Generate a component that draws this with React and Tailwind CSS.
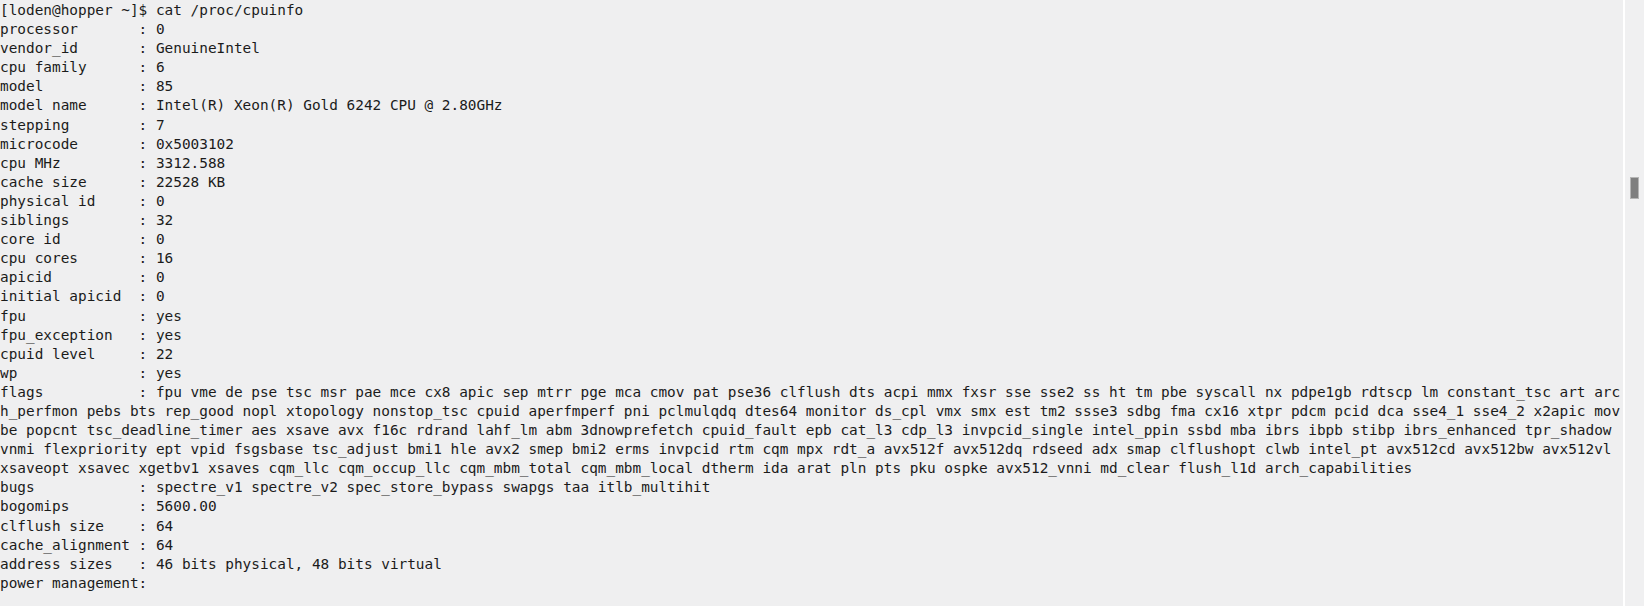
const pad = (s) => s.padEnd(16, " ");

const rows = [
  ["processor", "0"],
  ["vendor_id", "GenuineIntel"],
  ["cpu family", "6"],
  ["model", "85"],
  ["model name", "Intel(R) Xeon(R) Gold 6242 CPU @ 2.80GHz"],
  ["stepping", "7"],
  ["microcode", "0x5003102"],
  ["cpu MHz", "3312.588"],
  ["cache size", "22528 KB"],
  ["physical id", "0"],
  ["siblings", "32"],
  ["core id", "0"],
  ["cpu cores", "16"],
  ["apicid", "0"],
  ["initial apicid", "0"],
  ["fpu", "yes"],
  ["fpu_exception", "yes"],
  ["cpuid level", "22"],
  ["wp", "yes"],
];

const flagLines = [
  pad("flags") + ": fpu vme de pse tsc msr pae mce cx8 apic sep mtrr pge mca cmov pat pse36 clflush dts acpi mmx fxsr sse sse2 ss ht tm pbe syscall nx pdpe1gb rdtscp lm constant_tsc art arc",
  "h_perfmon pebs bts rep_good nopl xtopology nonstop_tsc cpuid aperfmperf pni pclmulqdq dtes64 monitor ds_cpl vmx smx est tm2 ssse3 sdbg fma cx16 xtpr pdcm pcid dca sse4_1 sse4_2 x2apic mov",
  "be popcnt tsc_deadline_timer aes xsave avx f16c rdrand lahf_lm abm 3dnowprefetch cpuid_fault epb cat_l3 cdp_l3 invpcid_single intel_ppin ssbd mba ibrs ibpb stibp ibrs_enhanced tpr_shadow",
  "vnmi flexpriority ept vpid fsgsbase tsc_adjust bmi1 hle avx2 smep bmi2 erms invpcid rtm cqm mpx rdt_a avx512f avx512dq rdseed adx smap clflushopt clwb intel_pt avx512cd avx512bw avx512vl",
  "xsaveopt xsavec xgetbv1 xsaves cqm_llc cqm_occup_llc cqm_mbm_total cqm_mbm_local dtherm ida arat pln pts pku ospke avx512_vnni md_clear flush_l1d arch_capabilities",
];

const tail = [
  ["bugs", "spectre_v1 spectre_v2 spec_store_bypass swapgs taa itlb_multihit"],
  ["bogomips", "5600.00"],
  ["clflush size", "64"],
  ["cache_alignment", "64"],
  ["address sizes", "46 bits physical, 48 bits virtual"],
];

export default function App() {
  const lines = [
    "[loden@hopper ~]$ cat /proc/cpuinfo",
    ...rows.map(([k, v]) => pad(k) + ": " + v),
    ...flagLines,
    ...tail.map(([k, v]) => pad(k) + ": " + v),
    "power management:",
  ];
  return (
    <div className="flex h-[606px] w-[1644px] overflow-hidden bg-[#efeff0]">
      <div
        className="flex-1 pt-[1px] text-[14.4px] leading-[19.1px] text-[#1b1b1b]"
        style={{ fontFamily: '"DejaVu Sans Mono", "Liberation Mono", monospace' }}
      >
        {lines.map((l, i) => (
          <div key={i} className="whitespace-pre">
            {l}
          </div>
        ))}
      </div>
      <div className="w-[2px] bg-white" />
      <div className="w-[19px] bg-[#f0f0f1] pt-[177px] pl-[5px]">
        <div className="h-[22px] w-[9px] border border-[#b5b5b5] bg-[#7f7f7f]" />
      </div>
    </div>
  );
}
